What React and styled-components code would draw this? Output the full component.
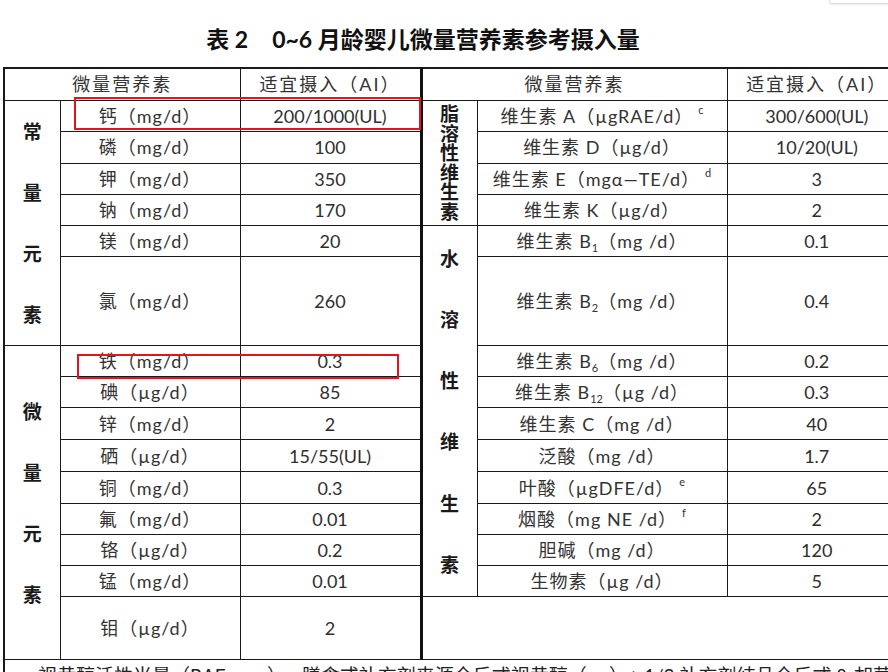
import React from "react";
import styled, { createGlobalStyle } from "styled-components";

const GlobalStyle = createGlobalStyle`
  html, body {
    margin: 0;
    padding: 0;
    background: #fff;
    overflow: hidden;
  }
  body {
    font-family: "Lato", "Noto Sans CJK SC", sans-serif;
    color: #222;
  }
`;

const Page = styled.div`
  position: relative;
  width: 888px;
  height: 672px;
  overflow: hidden;
  box-sizing: border-box;
  padding: 24px 0 0 3px;
`;

const Title = styled.h1`
  margin: 0 0 13px;
  width: 840px;
  text-align: center;
  font-size: 23px;
  line-height: 30px;
  font-weight: 700;
  color: #111;
  white-space: nowrap;
`;

const TitleGap = styled.span`
  display: inline-block;
  width: 24px;
`;

const Table = styled.table`
  border-collapse: collapse;
  table-layout: fixed;
  width: 903px;
  border: 2px solid #1a1a1a;
`;

const Row = styled.tr`
  height: ${(p) => p.$h}px;
`;

const Cell = styled.td`
  border: 1.5px solid #1a1a1a;
  border-left: ${(p) => (p.$split ? "3px solid #111" : "1.5px solid #1a1a1a")};
  padding: 0;
  text-align: center;
  vertical-align: middle;
  font-size: 18px;
  line-height: 22px;
  color: #2e2e2e;
  white-space: nowrap;
  overflow: hidden;
`;

const HeadCell = styled(Cell)`
  letter-spacing: 2px;
  color: #333;
`;

const NameCell = styled(Cell)`
  letter-spacing: 1px;
  color: #333;
`;

const GroupCell = styled(Cell)`
  font-weight: 700;
  font-size: 19px;
  color: #1a1a1a;
`;

const GroupText = styled.div`
  display: flex;
  flex-direction: column;
  align-items: center;
  & > span {
    height: ${(p) => p.$step}px;
    line-height: ${(p) => p.$step}px;
  }
`;

const NoteCell = styled(Cell)`
  text-align: left;
  vertical-align: top;
  padding: 5px 0 0 33px;
  font-size: 19px;
  color: #222;
`;

const Sup = styled.sup`
  font-size: 11px;
  line-height: 0;
  vertical-align: 9px;
  margin-left: 5px;
  letter-spacing: 0;
`;

const Sub = styled.sub`
  font-size: 11px;
  line-height: 0;
  vertical-align: -4px;
  letter-spacing: 0;
`;

const Mark = styled.div`
  position: absolute;
  left: ${(p) => p.$x}px;
  top: ${(p) => p.$y}px;
  width: ${(p) => p.$w}px;
  height: ${(p) => p.$h}px;
  border: 2px solid #e3141d;
  box-sizing: border-box;
  pointer-events: none;
`;

const CornerPanel = styled.div`
  position: absolute;
  left: 829px;
  top: -12px;
  width: 80px;
  height: 14px;
  border: 1.5px solid #dcdcdc;
  border-radius: 3px;
  box-shadow: 0 1px 2px rgba(0, 0, 0, 0.08);
  background: #fff;
`;

const Group = ({ text, step }) => (
  <GroupText $step={step}>
    {text.split("").map((c, i) => (
      <span key={i}>{c}</span>
    ))}
  </GroupText>
);

const rows = [
  { h: 31.7, l: ["钙（mg/d）", "200/1000(UL)"], r: [<>维生素 A（µgRAE/d）<Sup>c</Sup></>, "300/600(UL)"],
    lg: { text: "常量元素", span: 6, step: 61 }, rg: { text: "脂溶性维生素", span: 4, step: 19.5 } },
  { h: 31.6, l: ["磷（mg/d）", "100"], r: ["维生素 D（µg/d）", "10/20(UL)"] },
  { h: 31, l: ["钾（mg/d）", "350"], r: [<>维生素 E（mgα—TE/d）<Sup>d</Sup></>, "3"] },
  { h: 31.7, l: ["钠（mg/d）", "170"], r: ["维生素 K（µg/d）", "2"] },
  { h: 31, l: ["镁（mg/d）", "20"], r: [<>维生素 B<Sub>1</Sub>（mg /d）</>, "0.1"],
    rg: { text: "水溶性维生素", span: 10, step: 61.2 } },
  { h: 89, l: ["氯（mg/d）", "260"], r: [<>维生素 B<Sub>2</Sub>（mg /d）</>, "0.4"] },
  { h: 30.7, l: ["铁（mg/d）", "0.3"], r: [<>维生素 B<Sub>6</Sub>（mg /d）</>, "0.2"],
    lg: { text: "微量元素", span: 9, step: 61 } },
  { h: 31, l: ["碘（µg/d）", "85"], r: [<>维生素 B<Sub>12</Sub>（µg /d）</>, "0.3"] },
  { h: 31.8, l: ["锌（mg/d）", "2"], r: ["维生素 C（mg /d）", "40"] },
  { h: 32.5, l: ["硒（µg/d）", "15/55(UL)"], r: ["泛酸（mg /d）", "1.7"] },
  { h: 31.3, l: ["铜（mg/d）", "0.3"], r: [<>叶酸（µgDFE/d）<Sup>e</Sup></>, "65"] },
  { h: 31, l: ["氟（mg/d）", "0.01"], r: [<>烟酸（mg NE /d）<Sup>f</Sup></>, "2"] },
  { h: 31.7, l: ["铬（µg/d）", "0.2"], r: ["胆碱（mg /d）", "120"] },
  { h: 31, l: ["锰（mg/d）", "0.01"], r: ["生物素（µg /d）", "5"] },
  { h: 63, l: ["钼（µg/d）", "2"], r: null },
];

export default function App() {
  return (
    <Page>
      <GlobalStyle />
      <CornerPanel />
      <Title>
        表 2<TitleGap />0~6 月龄婴儿微量营养素参考摄入量
      </Title>
      <Table>
        <colgroup>
          <col style={{ width: 56 }} />
          <col style={{ width: 180 }} />
          <col style={{ width: 181 }} />
          <col style={{ width: 56 }} />
          <col style={{ width: 250 }} />
          <col style={{ width: 180 }} />
        </colgroup>
        <tbody>
          <Row $h={32}>
            <HeadCell colSpan={2}>微量营养素</HeadCell>
            <HeadCell>适宜摄入（AI）</HeadCell>
            <HeadCell colSpan={2} $split>微量营养素</HeadCell>
            <HeadCell>适宜摄入（AI）</HeadCell>
          </Row>
          {rows.map((row, i) => (
            <Row key={i} $h={row.h}>
              {row.lg && (
                <GroupCell rowSpan={row.lg.span}>
                  <Group text={row.lg.text} step={row.lg.step} />
                </GroupCell>
              )}
              <NameCell>{row.l[0]}</NameCell>
              <Cell>{row.l[1]}</Cell>
              {row.rg && (
                <GroupCell rowSpan={row.rg.span} $split>
                  <Group text={row.rg.text} step={row.rg.step} />
                </GroupCell>
              )}
              {row.r ? (
                <>
                  <NameCell>{row.r[0]}</NameCell>
                  <Cell>{row.r[1]}</Cell>
                </>
              ) : (
                <Cell colSpan={3} $split />
              )}
            </Row>
          ))}
          <Row $h={60}>
            <NoteCell colSpan={6}>
              视黄醇活性当量（RAE，µg）= 膳食或补充剂来源全反式视黄醇（µg）+ 1/2 补充剂纯品全反式 β-胡萝卜素（µg）+ 1/12 膳食全反式 β-胡萝卜素（µg）
            </NoteCell>
          </Row>
        </tbody>
      </Table>
      <Mark $x={74} $y={97} $w={347} $h={33} />
      <Mark $x={77} $y={354} $w={322} $h={25} />
    </Page>
  );
}
